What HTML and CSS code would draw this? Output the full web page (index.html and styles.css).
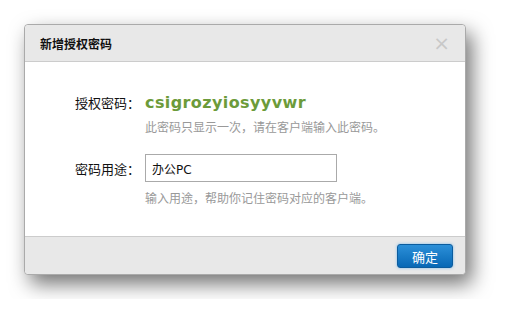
FILE: index.html
```html
<!DOCTYPE html>
<html lang="zh-CN">
<head>
    <meta charset="UTF-8">
    <title>新增授权密码</title>
    <link rel="stylesheet" href="styles.css">
</head>
<body>
<div class="dialog">
    <div class="dialog-header">
        <h3>新增授权密码</h3>
        <span class="close">&times;</span>
    </div>
    <div class="dialog-body">
        <div class="row">
            <label>授权密码：</label>
            <span class="code">csigrozyiosyyvwr</span>
        </div>
        <p class="hint">此密码只显示一次，请在客户端输入此密码。</p>

        <div class="row row-input">
            <label for="usage">密码用途：</label>
            <input type="text" id="usage" value="办公PC">
        </div>
        <p class="hint">输入用途，帮助你记住密码对应的客户端。</p>
    </div>
    <div class="dialog-footer">
        <button type="button" class="btn">确定</button>
    </div>
</div>
</body>
</html>
```

FILE: styles.css
```css
body {
    margin: 0;
    padding: 24px;
    background: #fff;
    font-family: "DejaVu Sans", "Noto Sans CJK SC", sans-serif;
    font-size: 13px;
    color: #222;
}

.dialog {
    width: 440px;
    border: 1px solid #aaa;
    border-radius: 4px;
    background: #fff;
    box-shadow: 6px 9px 20px rgba(0, 0, 0, 0.55);
}

.dialog-header {
    display: flex;
    align-items: center;
    justify-content: space-between;
    height: 36px;
    padding: 0 15px 0 15px;
    background: #e8e8e8;
    border-bottom: 1px solid #ccc;
    border-radius: 4px 4px 0 0;
}

.dialog-header h3 {
    margin: 0;
    font-family: "Noto Sans CJK SC", sans-serif;
    font-size: 12px;
    font-weight: bold;
    color: #111;
}

.close {
    font-size: 20px;
    line-height: 1;
    color: #c8c8c8;
}

.dialog-body {
    padding: 26px 0 29px 50px;
}

.row {
    display: flex;
    align-items: center;
    height: 28px;
}

.row label {
    width: 70px;
    font-family: "Noto Sans CJK SC", sans-serif;
    font-size: 13px;
    color: #111;
}

.code {
    font-size: 16px;
    font-weight: bold;
    color: #6c9b3a;
    letter-spacing: 0.4px;
}

.hint {
    margin: 2px 0 0 70px;
    line-height: 18px;
    font-family: "Noto Sans CJK SC", sans-serif;
    font-size: 12px;
    color: #999;
}

.row-input {
    margin-top: 18px;
}

.row-input + .hint {
    margin-top: 7px;
}

.row input {
    width: 192px;
    height: 28px;
    box-sizing: border-box;
    padding: 0 6px;
    border: 1px solid #aaa;
    font-family: "DejaVu Sans", "Noto Sans CJK SC", sans-serif;
    font-size: 12px;
    color: #111;
}

.dialog-footer {
    display: flex;
    justify-content: flex-end;
    padding: 7px 12px 6px;
    background: #e8e8e8;
    border-top: 1px solid #ccc;
    border-radius: 0 0 4px 4px;
}

.btn {
    width: 56px;
    height: 24px;
    border: 1px solid #0b5c9e;
    border-radius: 3px;
    background: linear-gradient(#2b8fd8, #0868b5);
    box-shadow: 0 0 3px rgba(80, 170, 240, 0.7);
    color: #fff;
    font-family: "Noto Sans CJK SC", sans-serif;
    font-size: 13px;
    cursor: pointer;
}
```
